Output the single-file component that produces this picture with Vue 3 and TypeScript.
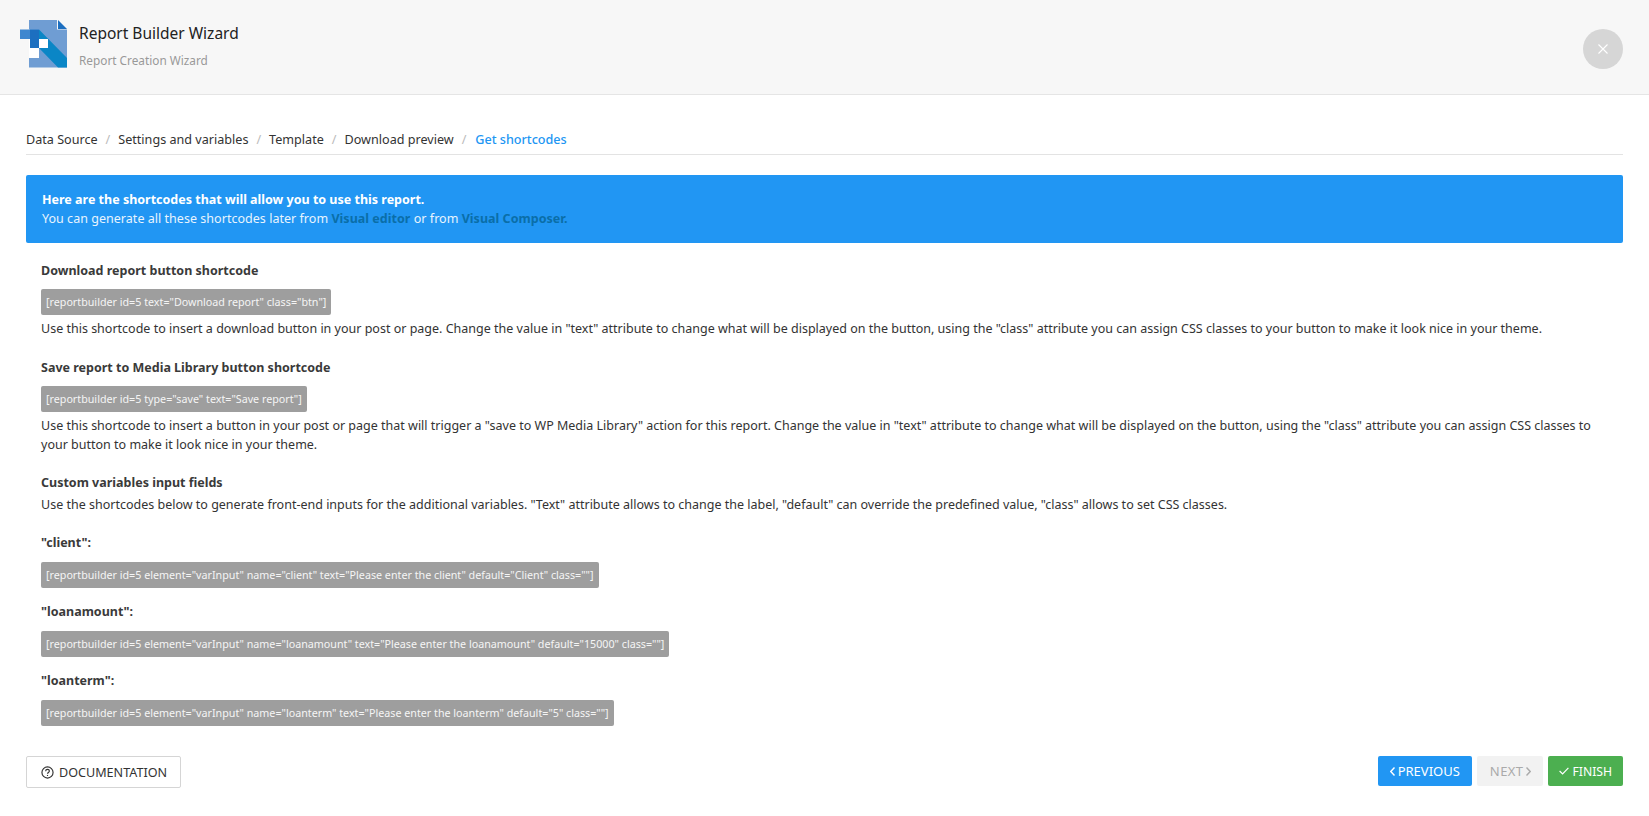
<script setup lang="ts">
const crumbs: string[] = ['Data Source', 'Settings and variables', 'Template', 'Download preview']
const vars = [
  { name: '"client":', code: '[reportbuilder id=5 element="varInput" name="client" text="Please enter the client" default="Client" class=""]' },
  { name: '"loanamount":', code: '[reportbuilder id=5 element="varInput" name="loanamount" text="Please enter the loanamount" default="15000" class=""]' },
  { name: '"loanterm":', code: '[reportbuilder id=5 element="varInput" name="loanterm" text="Please enter the loanterm" default="5" class=""]' },
]
</script>

<template>
  <div class="page">
    <header class="top">
      <svg class="logo" width="48" height="50" viewBox="20 19 48 50">
        <path fill="#fff" d="M29 39H48V58H29Z" />
        <path fill="#6f9dd3" d="M29 20H57V29.5H67V67.5H29V58H39V48H48V39H39V29.5H29Z" />
        <path fill="#1c6fc0" d="M58 20L67 29H58Z" />
        <path fill="#3f87cf" d="M20 29.5H39V39H20Z" />
        <path fill="#1c6fc0" d="M30 29.5H39V48H30Z" />
        <path fill="#0a86c6" d="M39 29.5L67 58V67.5H58L39 48H48V39H39Z" />
      </svg>
      <div class="titles">
        <div class="title">Report Builder Wizard</div>
        <div class="subtitle">Report Creation Wizard</div>
      </div>
      <button class="close" type="button" aria-label="Close">
        <svg width="10" height="10" viewBox="0 0 10 10"><path d="M.5.5l9 9M9.5.5l-9 9" stroke="#fff" stroke-width="1.1" fill="none" /></svg>
      </button>
    </header>

    <main class="body">
      <nav class="crumbs">
        <template v-for="c in crumbs" :key="c">
          <span>{{ c }}</span><span class="sep">/</span>
        </template>
        <span class="active">Get shortcodes</span>
      </nav>

      <div class="alert">
        <strong>Here are the shortcodes that will allow you to use this report.</strong><br />
        <span class="line2">You can generate all these shortcodes later from <b class="lnk">Visual editor</b> or from <b class="lnk">Visual Composer.</b></span>
      </div>

      <section class="content">
        <h4 class="first">Download report button shortcode</h4>
        <code class="sc">[reportbuilder id=5 text="Download report" class="btn"]</code>
        <p>Use this shortcode to insert a download button in your post or page. Change the value in "text" attribute to change what will be displayed on the button, using the "class" attribute you can assign CSS classes to your button to make it look nice in your theme.</p>

        <h4 class="block">Save report to Media Library button shortcode</h4>
        <code class="sc">[reportbuilder id=5 type="save" text="Save report"]</code>
        <p>Use this shortcode to insert a button in your post or page that will trigger a "save to WP Media Library" action for this report. Change the value in "text" attribute to change what will be displayed on the button, using the "class" attribute you can assign CSS classes to your button to make it look nice in your theme.</p>

        <h4 class="block">Custom variables input fields</h4>
        <p>Use the shortcodes below to generate front-end inputs for the additional variables. "Text" attribute allows to change the label, "default" can override the predefined value, "class" allows to set CSS classes.</p>

        <div class="vars">
          <div v-for="v in vars" :key="v.name">
            <h4>{{ v.name }}</h4>
            <code class="sc">{{ v.code }}</code>
          </div>
        </div>
      </section>

      <footer class="foot">
        <button class="btn doc" type="button">
          <svg width="13" height="13" viewBox="0 0 14 14" fill="none" stroke="#333" stroke-width="1.25">
            <circle cx="7" cy="7" r="6" />
            <path d="M5 5.6C5 4.4 5.9 3.7 7 3.7S9 4.4 9 5.5C9 7 7 7 7 8.4" />
            <path d="M7 9.6v1.2" />
          </svg>
          DOCUMENTATION
        </button>
        <div class="nav">
          <button class="btn prev" type="button">
            <svg width="5" height="9" viewBox="0 0 5 9" fill="none" stroke="#fff" stroke-width="1.4"><path d="M4.5 .5L.8 4.5l3.7 4" /></svg>
            PREVIOUS
          </button>
          <button class="btn next" type="button">
            NEXT
            <svg width="5" height="9" viewBox="0 0 5 9" fill="none" stroke="#aaa" stroke-width="1.4"><path d="M.5 .5l3.7 4-3.7 4" /></svg>
          </button>
          <button class="btn finish" type="button">
            <svg width="10" height="8" viewBox="0 0 10 8" fill="none" stroke="#fff" stroke-width="1.2"><path d="M.6 4l3 3L9.4 .8" /></svg>
            FINISH
          </button>
        </div>
      </footer>
    </main>
  </div>
</template>

<style>
html, body { margin: 0; background: #fff; }
</style>

<style scoped>
.page {
  font-family: "Noto Sans", "Open Sans", sans-serif;
  font-size: 12.5px;
  line-height: 18.57px;
  color: #333;
  height: 816px;
  overflow: hidden;
}
.top {
  height: 95px;
  box-sizing: border-box;
  background: #f7f7f7;
  border-bottom: 1px solid #e5e5e5;
  display: flex;
  align-items: flex-start;
  padding: 19px 0 0 20px;
}
.logo { flex: none; margin-right: 11px; }
.titles { flex: 1; }
.title { font-size: 15.5px; line-height: 22px; color: #222; margin-top: 3px; }
.subtitle { font-size: 11.8px; line-height: 18px; color: #999; margin-top: 7px; }
.close {
  width: 40px; height: 40px; border-radius: 50%; border: 0; padding: 0;
  background: #d6d6d6; display: flex; align-items: center; justify-content: center;
  margin: 10px 26px 0 0;
}
.body { padding: 0 26px; }
.crumbs {
  margin-top: 35px; height: 23px; padding-top: 1px; border-bottom: 1px solid #e3e3e3;
  display: flex;
  font-size: 12.6px;
  white-space: nowrap;
}
.sep { color: #bbb; padding: 0 8px; }
.active { color: #2196f3; font-weight: 500; padding-left: 1px; }
.alert {
  margin-top: 20px; height: 68px; box-sizing: border-box;
  background: #2196f3; color: #e8f4fe; border-radius: 2px;
  padding: 16px;
}
.alert strong { color: #fff; }
.line2 { letter-spacing: .03px; }
.lnk { color: #0a6ea8; }
.content { padding: 0 15px; }
h4 { margin: 0; padding-top: 1px; font-size: 12.5px; font-weight: 700; line-height: 18px; color: #3a3a3a; }
.first { margin-top: 17px; padding-top: 2px; line-height: 17px; }
.block { margin-top: 18.4px; padding-top: 2px; line-height: 17px; }
.sc {
  display: block; width: fit-content; margin-top: 10px; font-family: inherit; font-size: 10.72px; line-height: 26px;
  height: 26px; background: #9e9e9e; color: #f5f5f5; border-radius: 2px; padding: 0 5px;
}
p { margin: 5px 0 0; }
.vars { margin-top: 18px; display: flex; flex-direction: column; gap: 14px; }
.foot {
  display: flex; justify-content: space-between; align-items: flex-start;
  margin-top: 30px;
}
.nav { display: flex; gap: 5px; }
.btn {
  font-family: inherit; font-size: 13px; height: 30px; border-radius: 2px; border: 0;
  display: inline-flex; align-items: center; gap: 3px; padding: 0 12px;
}
.doc { height: 32px; font-size: 12.6px; background: #fff; border: 1px solid #d5d5d5; color: #333; padding: 0 13px 0 14px; gap: 5px; }
.prev { background: #2196f3; color: #fff; }
.next { background: #f2f2f2; color: #aaa; letter-spacing: .4px; padding-left: 13px; }
.finish { background: #4caf50; color: #fff; font-size: 12.2px; padding: 0 11px; }
</style>
